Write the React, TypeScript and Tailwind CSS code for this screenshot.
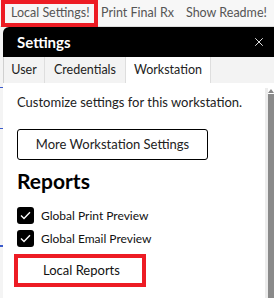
import { X } from "lucide-react";

const font = { fontFamily: 'Lato, "Noto Sans", sans-serif' };

function Check({ label }: { label: string }) {
  return (
    <div className="flex items-center gap-[7px] h-[17px]">
      <div className="w-[17px] h-[17px] bg-black rounded-[3px] flex items-center justify-center">
        <svg width="11" height="9" viewBox="0 0 11 9" fill="none">
          <path d="M1 4.5 L4 7.5 L10 1.2" stroke="white" strokeWidth="1.4" />
        </svg>
      </div>
      <span className="text-[12px] text-[#111] leading-none whitespace-nowrap">{label}</span>
    </div>
  );
}

export default function App() {
  return (
    <div className="w-[274px] h-[298px] bg-[#f0f0f0] overflow-hidden flex flex-col" style={font}>
      {/* top link bar */}
      <div className="h-[27px] bg-[#f7f7f7] border-b border-[#dcdcdc] flex items-center text-[12.5px] text-[#555] shrink-0 whitespace-nowrap">
        <div className="ml-[1px] h-[27px] w-[97px] border-[4px] border-[#ed1c24] flex items-center pl-[6px]">
          Local Settings!
        </div>
        <span className="ml-[3px]">Print Final Rx</span>
        <span className="ml-[12px]">Show Readme!</span>
      </div>

      <div className="flex flex-1 min-h-0">
        {/* strip behind dialog */}
        <div className="w-[3px] bg-[#f4f4f4] flex flex-col">
          <div className="h-[60px]" />
          <div className="h-[1px] bg-[#3b5bcc]" />
          <div className="h-[40px]" />
          <div className="h-[1px] bg-[#3b5bcc]" />
          <div className="h-[116px]" />
          <div className="h-[2px] bg-[#3b5bcc]" />
        </div>

        {/* dialog */}
        <div className="flex-1 flex flex-col bg-white rounded-tl-[6px] overflow-hidden">
          <div className="h-[30px] bg-black flex items-center justify-between pl-[14px] pr-[8px] shrink-0">
            <span className="text-white font-bold text-[15px]">Settings</span>
            <X className="w-[14px] h-[14px] text-white" strokeWidth={1.5} />
          </div>

          <div className="h-[26px] bg-[#f3f3f3] flex text-[12.5px] text-[#222] border-l border-[#d0d0d0] shrink-0 whitespace-nowrap">
            <div className="w-[41px] flex items-center justify-center border-r border-[#dedede]">User</div>
            <div className="w-[81px] flex items-center justify-center border-r border-[#dedede]">Credentials</div>
            <div className="w-[85px] flex items-center justify-center bg-white border-r border-[#dedede]">Workstation</div>
          </div>

          <div className="flex flex-1 min-h-0">
            <div className="flex-1 pl-[14px] pt-[10px] flex flex-col whitespace-nowrap">
              <p className="text-[13px] text-[#222] h-[18px] leading-[18px]">Customize settings for this workstation.</p>
              <button className="mt-[18px] w-[191px] h-[31px] border border-black rounded-[3px] text-[13px] text-[#222] bg-white">
                More Workstation Settings
              </button>
              <h2 className="mt-[8px] text-[21px] font-bold text-black leading-[26px]">Reports</h2>
              <div className="mt-[13px] flex flex-col gap-[6px]">
                <Check label="Global Print Preview" />
                <Check label="Global Email Preview" />
              </div>
              <div className="mt-[7px] -ml-[3px] w-[132px] h-[33px] border-[4px] border-[#ed1c24] flex items-center pl-[25px] text-[13px] text-[#111]">
                Local Reports
              </div>
            </div>

            {/* scrollbar */}
            <div className="w-[9px] mt-[5px] flex">
              <div className="w-[3px] bg-[#ececec]" />
              <div className="flex-1 flex flex-col">
                <svg width="6" height="5" viewBox="0 0 6 5">
                  <path d="M0 5 L3 1 L6 5 Z" fill="#888" />
                </svg>
                <div className="flex-1 mt-[1px] bg-[#8a8a8a]" />
              </div>
            </div>
          </div>
        </div>
      </div>
    </div>
  );
}
